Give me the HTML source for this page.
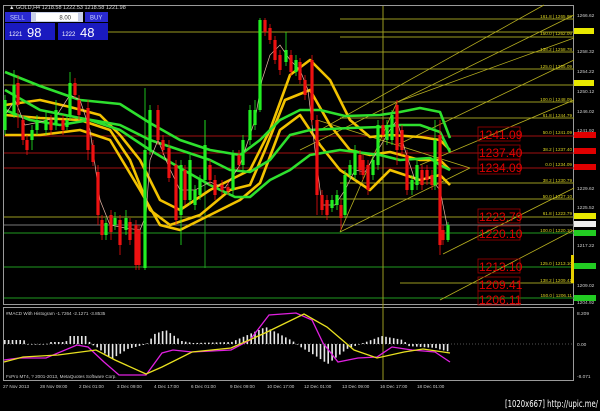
<!DOCTYPE html>
<html><head><meta charset="utf-8"><style>
html,body{margin:0;padding:0;background:#000;}
body{width:600px;height:411px;overflow:hidden;position:relative;font-family:"Liberation Sans",sans-serif;}
svg{position:absolute;left:0;top:0}
</style></head><body>
<svg width="600" height="411" viewBox="0 0 600 411" font-family="Liberation Sans, sans-serif">
<rect width="600" height="411" fill="#000"/>
<rect x="3.5" y="5.5" width="570" height="299" fill="none" stroke="#9a9a9a" stroke-width="1"/>
<rect x="3.5" y="307.5" width="570" height="73" fill="none" stroke="#9a9a9a" stroke-width="1"/>
<g stroke-width="1">
<line x1="108" y1="32" x2="574" y2="32" stroke="#9a9a20"/>
<line x1="340" y1="19" x2="574" y2="19" stroke="#9a9a20"/>
<line x1="340" y1="37" x2="574" y2="37" stroke="#9a9a20"/>
<line x1="340" y1="52" x2="574" y2="52" stroke="#9a9a20"/>
<line x1="340" y1="69" x2="574" y2="69" stroke="#9a9a20"/>
<line x1="4" y1="85" x2="574" y2="85" stroke="#9a9a20"/>
<line x1="340" y1="102" x2="574" y2="102" stroke="#9a9a20"/>
<line x1="340" y1="118" x2="574" y2="118" stroke="#9a9a20"/>
<line x1="4" y1="136" x2="574" y2="136" stroke="#a01010"/>
<line x1="4" y1="153" x2="574" y2="153" stroke="#a01010"/>
<line x1="4" y1="168" x2="574" y2="168" stroke="#a01010"/>
<line x1="340" y1="183" x2="574" y2="183" stroke="#9a9a20"/>
<line x1="340" y1="199" x2="574" y2="199" stroke="#9a9a20"/>
<line x1="4" y1="217" x2="574" y2="217" stroke="#9a9a20"/>
<line x1="4" y1="225" x2="574" y2="225" stroke="#777"/>
<line x1="4" y1="233" x2="574" y2="233" stroke="#1f9a1f"/>
<line x1="4" y1="267" x2="574" y2="267" stroke="#1f9a1f"/>
<line x1="400" y1="283" x2="574" y2="283" stroke="#9a9a20"/>
<line x1="4" y1="298" x2="574" y2="298" stroke="#1f9a1f"/>
<line x1="383" y1="6" x2="383" y2="380" stroke="#9a9a20"/>
<line x1="205" y1="120" x2="205" y2="268" stroke="#1f9a1f"/>
</g>
<g stroke="#b8b020" stroke-width="0.8" fill="none">
<line x1="340" y1="232" x2="397" y2="102"/>
<line x1="340" y1="232" x2="470" y2="168"/>
<line x1="317" y1="120" x2="470" y2="168"/>
<line x1="320" y1="130" x2="544" y2="5"/>
<line x1="300" y1="150" x2="574" y2="15"/>
<line x1="397" y1="102" x2="574" y2="38"/>
<line x1="397" y1="145" x2="574" y2="60"/>
<line x1="420" y1="165" x2="574" y2="100"/>
<line x1="443" y1="254" x2="574" y2="188"/>
<line x1="440" y1="300" x2="574" y2="230"/>
</g>
<g fill="none" stroke-width="2.6" stroke-linejoin="round">
<polyline stroke="#f2c200" points="5,105 40,100 70,107 100,115 120,135 140,160 160,200 180,210 210,190 230,180 250,170 270,130 290,75 310,60 330,80 350,120 370,137 390,135 420,137 440,140 450,150"/>
<polyline stroke="#f2c200" points="5,115 40,118 80,120 110,130 130,160 150,210 170,225 200,215 230,190 250,185 265,150 285,100 310,90 330,125 350,150 370,155 390,152 420,160 440,160 450,170"/>
<polyline stroke="#f2c200" points="5,135 40,135 80,130 110,140 140,190 160,225 180,230 210,215 240,200 260,183 280,130 300,115 320,145 340,170 370,190 390,170 420,180 440,175 450,185"/>
<polyline stroke="#2ee02e" points="5,72 40,86 80,100 120,104 150,123 180,140 210,150 240,155 260,140 280,120 300,110 320,110 345,116 380,115 400,112 420,108 440,112 450,138"/>
<polyline stroke="#2ee02e" points="5,90 40,110 80,118 120,125 150,140 180,150 210,160 230,170 250,172 270,160 290,135 310,130 350,128 380,127 400,125 420,125 440,132 450,152"/>
<polyline stroke="#2ee02e" points="5,110 30,120 60,125 90,120 120,130 150,150 180,168 210,185 235,197 250,197 270,180 290,170 310,155 340,150 380,155 400,160 430,158 440,165 450,170"/>
</g>
<polyline fill="none" stroke="#e8b8a8" stroke-width="0.7" points="5,115 15,100 25,125 40,122 55,118 70,95 80,100 90,130 100,200 110,225 125,228 140,230 146,215 150,160 158,140 168,165 180,190 195,190 210,182 225,188 240,165 255,120 262,80 270,55 280,45 290,60 300,70 308,90 315,150 322,205 335,205 345,190 355,170 365,172 378,150 390,130 397,120 405,150 415,180 430,178 440,190 448,230"/>
<g id="candles"></g>
<text x="9" y="9" fill="#ddd" font-size="5.5">▲ GOLD,H4  1218.58 1222.53 1218.58 1221.98</text>
<rect x="5" y="12" width="26" height="10" fill="#2a2ad0"/>
<text x="10" y="19.5" fill="#cfd8ff" font-size="6">SELL</text>
<rect x="31" y="12" width="52" height="10" fill="#c8d0e8"/>
<rect x="36" y="13" width="42" height="8" fill="#fff"/>
<text x="71" y="19.5" fill="#333" font-size="6" text-anchor="end">8.00</text>
<rect x="85" y="12" width="23" height="10" fill="#2a2ad0"/>
<text x="90" y="19.5" fill="#cfd8ff" font-size="6">BUY</text>
<rect x="5" y="23" width="50" height="17" fill="#1a1ac0"/>
<rect x="58" y="23" width="50" height="17" fill="#1a1ac0"/>
<text x="9" y="36" fill="#fff" font-size="6">1221</text>
<text x="27" y="37" fill="#fff" font-size="13">98</text>
<text x="62" y="36" fill="#fff" font-size="6">1222</text>
<text x="80" y="37" fill="#fff" font-size="13">48</text>
<g font-size="12" fill="#e00000">
<g fill="none" stroke="#a00000" stroke-width="0.8">
<rect x="478" y="127" width="42" height="14"/><rect x="478" y="145" width="42" height="14"/><rect x="478" y="160" width="42" height="14"/>
<rect x="478" y="209" width="42" height="14"/><rect x="478" y="226" width="42" height="14"/>
<rect x="478" y="259" width="42" height="14"/><rect x="478" y="277" width="42" height="14"/><rect x="478" y="291" width="42" height="14"/>
</g>
<text x="479" y="139">1241.09</text><text x="479" y="157">1237.40</text><text x="479" y="172">1234.09</text>
<text x="479" y="221">1223.79</text><text x="479" y="238">1220.10</text>
<text x="479" y="271">1213.10</text><text x="479" y="289">1209.41</text><text x="479" y="304">1206.11</text>
</g>
<g font-size="4.6" fill="#d8d020" text-anchor="end">
<text x="572" y="18">161.8 | 1265.99</text><text x="572" y="35">150.0 | 1262.09</text>
<text x="572" y="51">138.2 | 1258.78</text><text x="572" y="68">125.0 | 1255.09</text>
<text x="572" y="101">100.0 | 1248.09</text><text x="572" y="117">61.8 | 1244.79</text>
<text x="572" y="134">50.0 | 1241.09</text><text x="572" y="151">38.2 | 1237.40</text>
<text x="572" y="166">0.0 | 1234.09</text><text x="572" y="182">38.2 | 1230.79</text>
<text x="572" y="198">50.0 | 1227.10</text><text x="572" y="215">61.8 | 1223.79</text>
<text x="572" y="232">100.0 | 1220.10</text><text x="572" y="265">125.0 | 1213.10</text>
<text x="572" y="282">138.2 | 1209.41</text><text x="572" y="297">150.0 | 1206.11</text>
</g>
<g font-size="4.8" fill="#ccc">
<text x="577" y="17">1266.62</text><text x="577" y="53">1258.32</text><text x="577" y="73">1254.22</text>
<text x="577" y="93">1250.12</text><text x="577" y="113">1246.02</text><text x="577" y="132">1241.92</text>
<text x="577" y="190">1229.62</text><text x="577" y="209">1225.52</text><text x="577" y="247">1217.22</text>
<text x="577" y="287">1209.02</text><text x="577" y="304">1204.92</text>
<text x="577" y="315">8.209</text><text x="577" y="346">0.00</text><text x="577" y="378">-8.071</text>
</g>
<rect x="574" y="28" width="20" height="6" fill="#e8e800"/>
<rect x="574" y="80" width="20" height="6" fill="#e8e800"/>
<rect x="574" y="132" width="22" height="6" fill="#e00000"/>
<rect x="574" y="148" width="22" height="6" fill="#e00000"/>
<rect x="574" y="164" width="22" height="6" fill="#e00000"/>
<rect x="574" y="213" width="22" height="6" fill="#e8e800"/>
<rect x="574" y="221" width="22" height="6" fill="#eee"/>
<rect x="574" y="230" width="22" height="6" fill="#22cc22"/>
<rect x="574" y="263" width="22" height="6" fill="#22cc22"/>
<rect x="574" y="295" width="22" height="6" fill="#22cc22"/>
<rect x="571" y="255" width="3" height="28" fill="#e8d000"/>
<line x1="4" y1="344" x2="574" y2="344" stroke="#555" stroke-dasharray="1,2"/>
<g id="hist"></g>
<polyline fill="none" stroke="#e020e0" stroke-width="1.3" points="4,360 19,358 46,358 77,345 88,347 104,362 119,375 146,375 162,353 173,350 192,352 231,350 250,340 269,315 296,313 312,320 323,343 338,362 358,358 377,357 392,347 412,350 435,352 450,362"/>
<polyline fill="none" stroke="#e8e020" stroke-width="1.3" points="4,362 23,357 58,355 96,350 115,360 146,374 162,367 192,352 231,348 265,333 304,314 327,327 354,350 377,358 404,352 423,349 450,353"/>
<text x="6" y="315" fill="#ccc" font-size="4.6">#MACD With Histogram -1.7264 -2.1271 -3.8535</text>
<text x="6" y="378" fill="#ccc" font-size="4.6">FxPro MT4, ? 2001-2013, MetaQuotes Software Corp.</text>
<g font-size="4.6" fill="#ccc">
<text x="3" y="388">27 Nov 2013</text><text x="40" y="388">28 Nov 09:00</text><text x="79" y="388">2 Dec 01:00</text>
<text x="117" y="388">3 Dec 09:00</text><text x="154" y="388">4 Dec 17:00</text><text x="191" y="388">6 Dec 01:00</text>
<text x="230" y="388">9 Dec 09:00</text><text x="267" y="388">10 Dec 17:00</text><text x="304" y="388">12 Dec 01:00</text>
<text x="342" y="388">13 Dec 09:00</text><text x="380" y="388">16 Dec 17:00</text><text x="417" y="388">18 Dec 01:00</text>
</g>
<text x="505" y="407" fill="#fff" font-size="10" textLength="93" lengthAdjust="spacingAndGlyphs" font-family="DejaVu Sans, sans-serif">[1020x667] http://upic.me/</text>
</svg>
<script>
var C=[[5,'g',100,130,95,135],[14,'g',85,115,70,118],[18,'r',83,105,75,128],[23,'r',120,140,115,145],[27,'r',140,150,135,155],[32,'g',130,140,125,150],[37,'g',120,130,115,135],[46,'g',120,130,110,135],[51,'r',120,130,115,135],[56,'g',110,125,100,130],[63,'r',120,130,115,135],[67,'g',120,127,115,130],[70,'g',83,117,72,120],[75,'r',83,95,78,98],[79,'r',100,115,95,120],[88,'r',108,150,100,160],[93,'r',145,162,140,166],[98,'r',172,215,165,225],[102,'r',220,235,215,240],[106,'g',223,235,218,240],[111,'r',215,232,210,240],[115,'g',218,225,212,230],[120,'r',220,245,215,255],[126,'g',218,230,210,235],[130,'r',222,240,218,245],[136,'r',225,265,220,270],[139,'r',230,265,225,270],[145,'g',150,268,88,270],[150,'g',110,150,105,155],[158,'r',110,140,105,145],[163,'r',140,150,135,155],[169,'r',148,178,140,182],[176,'r',165,220,160,225],[181,'g',165,215,160,245],[185,'r',170,200,165,205],[190,'g',160,200,155,205],[195,'g',190,205,185,210],[200,'g',180,195,175,200],[205,'g',145,180,120,185],[210,'r',165,180,160,185],[215,'r',180,195,175,200],[222,'r',185,190,180,195],[228,'r',187,191,182,195],[233,'g',155,190,150,195],[239,'r',155,165,150,170],[243,'g',140,165,135,170],[250,'g',110,140,105,145],[255,'g',110,125,100,130],[260,'g',20,110,18,112],[265,'r',20,32,18,36],[270,'r',28,40,24,44],[275,'r',40,60,36,64],[280,'r',55,70,50,75],[286,'g',50,62,32,66],[291,'r',55,72,50,76],[296,'g',60,72,55,76],[300,'r',62,80,58,84],[305,'r',80,95,75,100],[312,'r',60,120,55,125],[317,'r',120,195,115,215],[322,'r',195,210,190,215],[327,'r',200,215,195,220],[332,'g',200,208,195,212],[337,'g',195,205,190,210],[341,'r',205,218,200,230],[345,'g',175,215,170,218],[350,'g',165,175,160,180],[355,'g',150,175,145,180],[360,'r',155,170,150,175],[363,'r',160,175,155,180],[368,'r',165,190,160,195],[373,'g',160,175,155,180],[378,'g',125,165,120,170],[383,'r',125,135,120,140],[387,'g',125,140,120,145],[392,'g',115,140,110,145],[397,'r',105,150,100,165],[402,'r',130,150,125,155],[407,'r',155,190,150,195],[412,'g',180,190,175,195],[417,'g',165,185,160,190],[422,'r',170,185,165,190],[427,'r',170,180,165,185],[432,'r',175,185,170,190],[435,'g',140,185,120,190],[440,'r',135,245,120,255],[443,'r',230,240,225,245],[448,'g',225,240,222,242]];
var s='';C.forEach(function(c){var col=c[1]=='g'?'#22ee22':'#ee1111';s+='<line x1="'+c[0]+'" y1="'+c[4]+'" x2="'+c[0]+'" y2="'+c[5]+'" stroke="'+col+'" stroke-width="0.8"/><rect x="'+(c[0]-1.6)+'" y="'+c[2]+'" width="3.2" height="'+Math.max(1,c[3]-c[2])+'" fill="'+col+'"/>';});
document.getElementById('candles').innerHTML=s;
var P=[[4,4],[23,4],[27,0],[46,0],[50,2],[65,2],[69,8],[85,8],[90,0],[96,-3],[111,-15],[127,-5],[146,0],[154,10],[165,14],[181,3],[192,1],[231,2],[265,17],[292,3],[300,-3],[315,-12],[327,-20],[346,-5],[365,2],[381,8],[403,4],[407,-2],[435,-4],[441,-6],[450,-8]];
function h(x){for(var i=0;i<P.length-1;i++){if(x>=P[i][0]&&x<=P[i+1][0]){var t=(x-P[i][0])/(P[i+1][0]-P[i][0]);return P[i][1]+t*(P[i+1][1]-P[i][1]);}}return 0;}
var t='';for(var x=4;x<=450;x+=3.85){var v=h(x);var y=v>0?344-v:344;t+='<rect x="'+x.toFixed(1)+'" y="'+y.toFixed(1)+'" width="1.6" height="'+Math.max(0.6,Math.abs(v)).toFixed(1)+'" fill="#e8e8e8"/>';}
document.getElementById('hist').innerHTML=t;
</script>
</body></html>
